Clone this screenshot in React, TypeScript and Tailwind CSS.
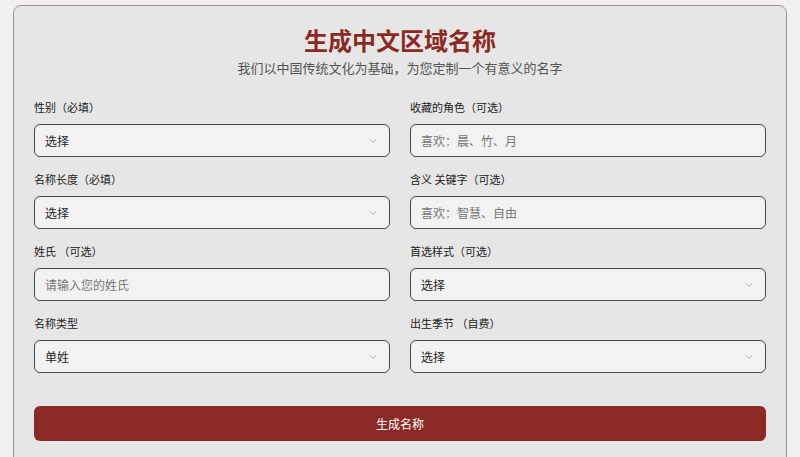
import { ChevronDown } from "lucide-react";

type Field = {
  label: string;
  kind: "select" | "input";
  value: string;
};

const leftFields: Field[] = [
  { label: "性别（必填）", kind: "select", value: "选择" },
  { label: "名称长度（必填）", kind: "select", value: "选择" },
  { label: "姓氏 （可选）", kind: "input", value: "请输入您的姓氏" },
  { label: "名称类型", kind: "select", value: "单姓" },
];

const rightFields: Field[] = [
  { label: "收藏的角色（可选）", kind: "input", value: "喜欢：晨、竹、月" },
  { label: "含义 关键字（可选）", kind: "input", value: "喜欢：智慧、自由" },
  { label: "首选样式（可选）", kind: "select", value: "选择" },
  { label: "出生季节 （自费）", kind: "select", value: "选择" },
];

const FieldBox = ({ field }: { field: Field }) => (
  <div className="flex flex-col">
    <label className="text-[11px] leading-4 text-[#222]">{field.label}</label>
    <div className="mt-[9px] flex h-[33px] items-center justify-between rounded-md border border-[#4a4a4a] bg-[#f2f2f2] pl-[10px] pr-[10px]">
      <span
        className={
          field.kind === "input"
            ? "text-[12px] text-[#777]"
            : "text-[12px] text-[#222]"
        }
      >
        {field.value}
      </span>
      {field.kind === "select" && (
        <ChevronDown className="h-3 w-3 text-[#999]" strokeWidth={1.5} />
      )}
    </div>
  </div>
);

export default function App() {
  const rows = leftFields.map((f, i) => [f, rightFields[i]]);
  return (
    <div
      className="h-[457px] overflow-hidden bg-[#f0f0f0] pt-[5px] px-[13px]"
      style={{ fontFamily: '"Noto Sans CJK SC", "Noto Sans", sans-serif' }}
    >
      <div className="h-[600px] rounded-lg border border-[#a8918f] bg-[#e6e6e6] px-[20px] pt-[18px]">
        <h1 className="text-center text-[24px] font-bold leading-[32px] text-[#8b2a23]">
          生成中文区域名称
        </h1>
        <p className="mt-[2px] text-center text-[13px] leading-5 text-[#555]">
          我们以中国传统文化为基础，为您定制一个有意义的名字
        </p>
        <div className="mt-[21px] grid grid-cols-2 gap-x-[20px] gap-y-[14px]">
          {rows.map(([l, r], i) => (
            <div key={i} className="contents">
              <FieldBox field={l} />
              <FieldBox field={r} />
            </div>
          ))}
        </div>
        <button className="mt-[33px] h-[35px] w-full rounded-md bg-[#8b2a25] text-[12px] text-white">
          生成名称
        </button>
      </div>
    </div>
  );
}
